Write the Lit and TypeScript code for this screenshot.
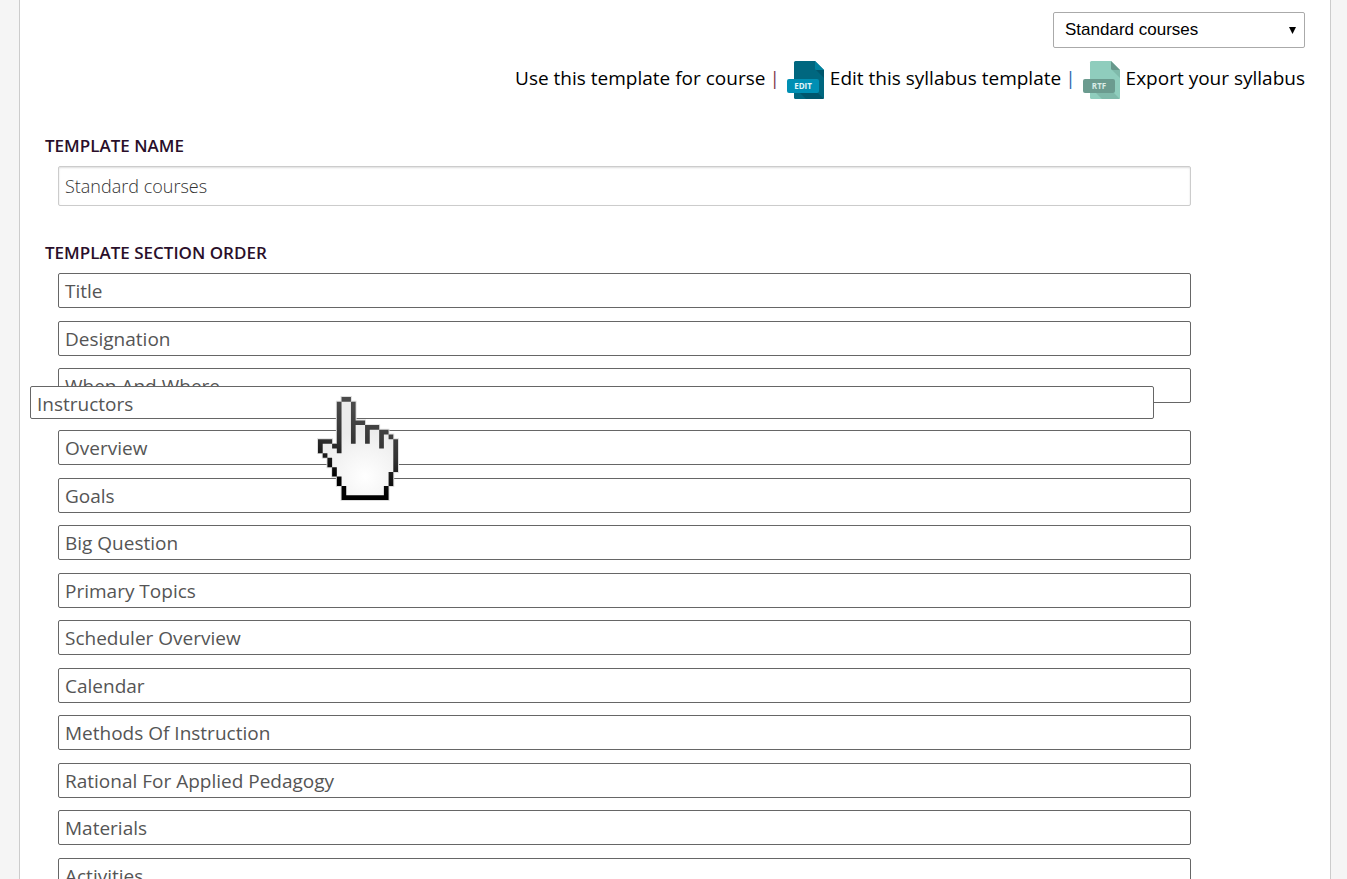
import { LitElement, html, css } from "lit";
import { customElement, property, state } from "lit/decorators.js";

@customElement("file-icon")
class FileIcon extends LitElement {
  @property() label = "";

  static styles = css`
    :host {
      display: block;
      width: 37px;
      height: 38px;
      --page: #00677f;
      --fold: #00829f;
      --shade: #00566c;
      --band: #008fb3;
      --ink: #e4f6fa;
    }
    :host([tone="soft"]) {
      --page: #8fcdbd;
      --fold: #68988c;
      --shade: #7fb9aa;
      --band: #6b9b8f;
      --ink: #d9ebe6;
    }
    svg {
      display: block;
    }
    .page { fill: var(--page); }
    .fold { fill: var(--fold); }
    .shade { fill: var(--shade); }
    .band { fill: var(--band); }
    .ink {
      fill: var(--ink);
      font: 700 8px "Open Sans", sans-serif;
      text-anchor: middle;
    }
  `;

  render() {
    return html`
      <svg width="37" height="38" viewBox="0 0 37 38" aria-hidden="true">
        <path class="page" d="M8.500 0H28L37 9V36.500Q37 38 35.500 38H8.500Q7 38 7 36.500V1.500Q7 0 8.500 0Z" />
        <path class="shade" d="M29 9H37V17ZM13 32H31L37 38H19Z" />
        <path class="fold" d="M28 0L37 9H29.500Q28 9 28 7.500Z" />
        <rect class="band" y="18" width="32" height="14" rx="2" />
        <text class="ink" x="16" y="28">${this.label}</text>
      </svg>
    `;
  }
}

@customElement("hand-pointer")
class HandPointer extends LitElement {
  static styles = css`
    :host {
      display: block;
      width: 80px;
      height: 103px;
    }
    svg {
      display: block;
      overflow: visible;
    }
    .halo {
      fill: none;
      stroke: #ddd;
      stroke-width: 0.4;
    }
  `;

  render() {
    return html`
      <svg width="80" height="103" viewBox="0 0 17 22" preserveAspectRatio="none" aria-hidden="true">
        <defs>
          <radialGradient id="palm" gradientUnits="userSpaceOnUse" cx="10" cy="17" r="10">
            <stop offset="0" stop-color="#fff" />
            <stop offset="1" stop-color="#ececec" />
          </radialGradient>
          <linearGradient id="edge" gradientUnits="userSpaceOnUse" x1="11" y1="3" x2="6" y2="18">
            <stop offset="0" stop-color="#4a4a4a" />
            <stop offset="0.5" stop-color="#333" />
            <stop offset="1" stop-color="#000" />
          </linearGradient>
        </defs>
        <path class="halo" d="M5 0H7V1H8V5H10V6H13V7H15V8H16V9H17V16H16V19H15V22H5V19H4V17H3V15H2V13H1V12H0V9H3V10H4V1H5Z" />
        <path fill="url(#palm)" d="M5 0H7V1H8V5H10V6H13V7H15V8H16V9H17V16H16V19H15V22H5V19H4V17H3V15H2V13H1V12H0V9H3V10H4V1H5Z" />
        <path
          fill="url(#edge)"
          d="M5 0H7V1H5ZM4 1H5V12H4V11H3V10H4ZM7 1H8V5H10V6H8V10H7ZM10 6H13V7H11V10H10ZM13 7H15V8H14V11H13ZM15 8H16V9H15ZM16 9H17V16H16ZM15 16H16V19H15ZM14 19H15V22H5V19H6V21H14ZM4 17H5V19H4ZM3 15H4V17H3ZM2 13H3V15H2ZM1 12H2V13H1ZM0 9H3V10H1V12H0Z"
        />
      </svg>
    `;
  }
}

@customElement("app-root")
class AppRoot extends LitElement {
  @state() private sections = [
    "Title",
    "Designation",
    "When And Where",
    "Instructors",
    "Overview",
    "Goals",
    "Big Question",
    "Primary Topics",
    "Scheduler Overview",
    "Calendar",
    "Methods Of Instruction",
    "Rational For Applied Pedagogy",
    "Materials",
    "Activities",
  ];

  @state() private dragged = "Instructors";

  static styles = css`
    :host {
      display: block;
      height: 100vh;
      overflow: hidden;
      background: #f5f5f5;
      color: #555;
      font: 19px/26px "Open Sans", sans-serif;
    }
    * {
      box-sizing: border-box;
    }
    main {
      min-height: 100vh;
      margin: 0 16px 0 19px;
      padding: 12px 25px 0;
      border: solid #ccc;
      border-width: 0 1px;
      background: #fff;
    }
    header {
      display: flex;
      flex-direction: column;
      align-items: flex-end;
      gap: 13px;
    }
    .picker {
      display: grid;
      width: 252px;
      align-items: center;
    }
    .picker > * {
      grid-area: 1 / 1;
    }
    select {
      height: 36px;
      padding: 0 30px 2px 11px;
      border: 1px solid #aaa;
      border-radius: 2px;
      appearance: none;
      background: #fff;
      color: #000;
      font: 17px "Liberation Sans", sans-serif;
    }
    .arrow {
      justify-self: end;
      margin-right: 9px;
      pointer-events: none;
    }
    nav {
      display: flex;
      align-items: center;
      gap: 4px;
    }
    nav a {
      display: flex;
      align-items: center;
      gap: 6px;
      color: #000;
      text-decoration: none;
    }
    nav a:not(:first-child) {
      margin-left: 3px;
    }
    nav span {
      padding-bottom: 4px;
    }
    .bar {
      color: #803850;
    }
    .bar.blue {
      color: #2f68b0;
    }
    h2,
    .title {
      display: block;
      margin: 0;
      color: #2a0f2a;
      font-size: 17px;
      font-weight: 600;
      line-height: 24px;
      text-transform: uppercase;
    }
    .field {
      margin-top: 35px;
    }
    .order {
      margin-top: 35px;
    }
    .field input {
      display: block;
      width: calc(100% - 127px);
      height: 40px;
      margin: 8px 0 0 13px;
      padding: 0 6px;
      border: 1px solid #ccc;
      border-radius: 2px;
      box-shadow: inset 0 1px 2px #ddd;
      color: #333;
      font: 300 18px "Open Sans", sans-serif;
    }
    ul {
      margin: 8px 114px 0 13px;
      padding: 0;
      list-style: none;
    }
    li {
      margin-bottom: 12px;
    }
    li:nth-child(odd) {
      margin-bottom: 13px;
    }
    .row {
      height: 35px;
      padding: 4px 6px;
      border: 1px solid #666;
      border-radius: 2px;
      background: #fff;
      line-height: 26px;
    }
    .slot {
      position: relative;
      height: 2px;
    }
    .slot .row {
      position: absolute;
      top: -30px;
      left: -28px;
      width: calc(100% - 9px);
      height: 33px;
    }
    hand-pointer {
      position: absolute;
      z-index: 1;
      top: -19px;
      left: 260px;
    }
  `;

  render() {
    return html`
      <main>
        <header>
          <div class="picker">
            <select aria-label="Template">
              <option>Standard courses</option>
            </select>
            <svg class="arrow" width="7" height="7" viewBox="0 0 7 7" aria-hidden="true">
              <path d="M0 0H7L3.500 7Z" />
            </svg>
          </div>
          <nav>
            <a href="#use"><span>Use this template for course</span></a>
            <span class="bar">|</span>
            <a href="#edit"><file-icon label="EDIT"></file-icon><span>Edit this syllabus template</span></a>
            <span class="bar blue">|</span>
            <a href="#export"><file-icon label="RTF" tone="soft"></file-icon><span>Export your syllabus</span></a>
          </nav>
        </header>
        <div class="field">
          <label class="title" for="name">Template name</label>
          <input id="name" type="text" value="Standard courses" />
        </div>
        <section class="order">
          <h2>Template section order</h2>
          <ul>
            ${this.sections.map((name) =>
              name === this.dragged
                ? html`<li class="slot"><div class="row">${name}</div><hand-pointer></hand-pointer></li>`
                : html`<li><div class="row">${name}</div></li>`
            )}
          </ul>
        </section>
      </main>
    `;
  }
}
